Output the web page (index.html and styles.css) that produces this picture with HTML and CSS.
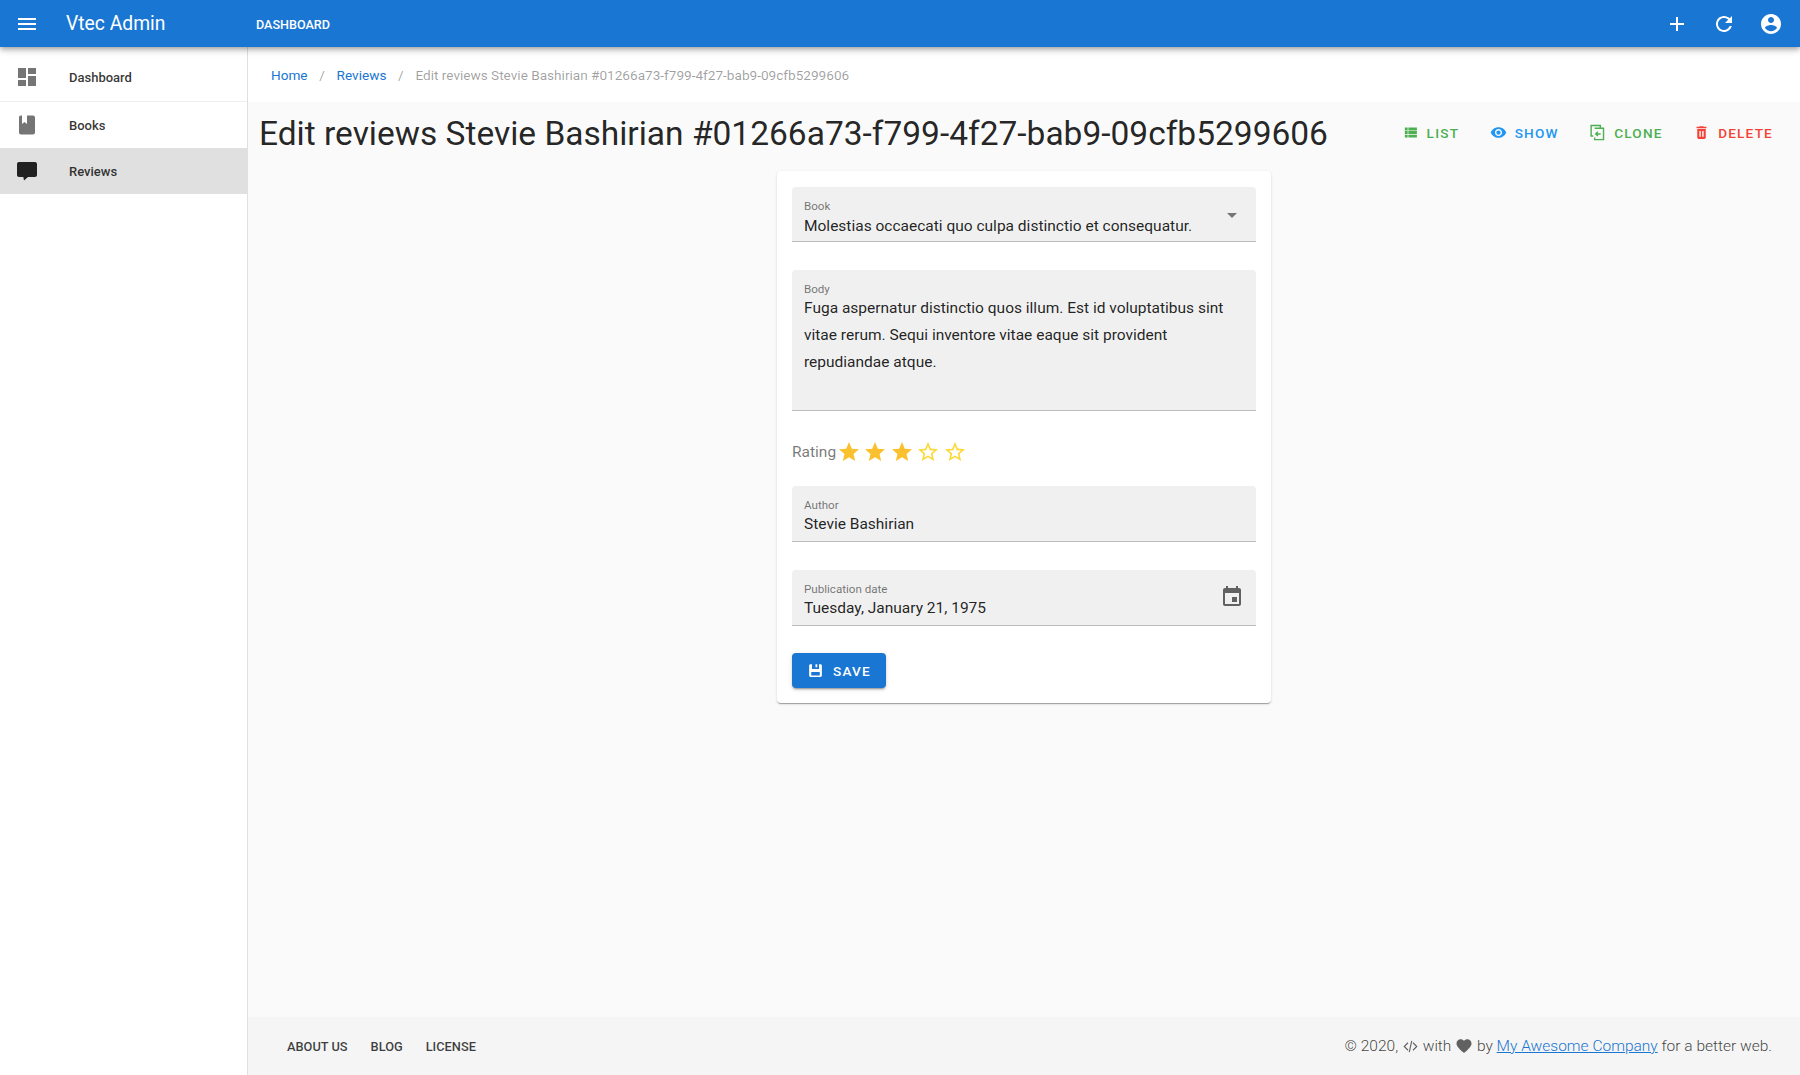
FILE: index.html
```html
<!DOCTYPE html>
<html lang="en">
<head>
    <meta charset="UTF-8">
    <title>Vtec Admin</title>
    <link rel="stylesheet" href="styles.css">
</head>
<body>
    <header class="appbar">
        <svg class="icon menu-icon" viewBox="0 0 24 24"><path d="M3 18h18v-2H3v2zm0-5h18v-2H3v2zm0-7v2h18V6H3z"/></svg>
        <span class="brand">Vtec Admin</span>
        <span class="appbar-link">DASHBOARD</span>
        <div class="appbar-actions">
            <svg class="icon" viewBox="0 0 24 24"><path d="M19 13h-6v6h-2v-6H5v-2h6V5h2v6h6v2z"/></svg>
            <svg class="icon" viewBox="0 0 24 24"><path d="M17.65 6.35C16.2 4.9 14.21 4 12 4c-4.42 0-7.99 3.58-7.99 8s3.57 8 7.99 8c3.73 0 6.84-2.55 7.73-6h-2.08c-.82 2.33-3.04 4-5.65 4-3.31 0-6-2.69-6-6s2.69-6 6-6c1.66 0 3.14.69 4.22 1.78L13 11h7V4l-2.35 2.35z"/></svg>
            <svg class="icon" viewBox="0 0 24 24"><path d="M12 2C6.48 2 2 6.48 2 12s4.48 10 10 10 10-4.48 10-10S17.52 2 12 2zm0 3c1.66 0 3 1.34 3 3s-1.34 3-3 3-3-1.34-3-3 1.34-3 3-3zm0 14.2c-2.5 0-4.71-1.28-6-3.22.03-1.99 4-3.08 6-3.08 1.99 0 5.97 1.09 6 3.08-1.29 1.94-3.5 3.22-6 3.22z"/></svg>
        </div>
    </header>

    <div class="layout">
        <nav class="sidebar">
            <a class="nav-item nav-first">
                <svg class="icon" viewBox="0 0 24 24"><path d="M3 13h8V3H3v10zm0 8h8v-6H3v6zm10 0h8V11h-8v10zm0-18v6h8V3h-8z"/></svg>
                <span>Dashboard</span>
            </a>
            <a class="nav-item">
                <svg class="icon" viewBox="0 0 24 24"><path d="M7 2.5V11l2.5-2 2.5 2V2.500h6c1.100 0 2 .9 2 2v15c0 1.100-.9 2-2 2H6c-1.100 0-2-.9-2-2v-15c0-1.100.9-2 2-2z"/></svg>
                <span>Books</span>
            </a>
            <a class="nav-item nav-active">
                <svg class="icon" viewBox="0 0 24 24"><path d="M4 3h16c1.100 0 2 .9 2 2v11c0 1.100-.9 2-2 2h-7l-4 3.500-.7-3.500H4c-1.100 0-2-.9-2-2V5c0-1.100.9-2 2-2z"/></svg>
                <span>Reviews</span>
            </a>
        </nav>

        <div class="content">
            <div class="breadcrumbs">
                <a>Home</a>
                <span class="crumb-sep">/</span>
                <a>Reviews</a>
                <span class="crumb-sep">/</span>
                <span class="crumb-current">Edit reviews Stevie Bashirian #01266a73-f799-4f27-bab9-09cfb5299606</span>
            </div>

            <main class="page">
                <div class="page-head">
                    <h1>Edit reviews Stevie Bashirian #01266a73-f799-4f27-bab9-09cfb5299606</h1>
                    <div class="page-actions">
                        <a class="action green">
                            <svg class="icon-sm" viewBox="0 0 24 24"><path d="M4 14h4v-4H4v4zm0 5h4v-4H4v4zM4 9h4V5H4v4zm5 5h12v-4H9v4zm0 5h12v-4H9v4zM9 5v4h12V5H9z"/></svg>
                            LIST
                        </a>
                        <a class="action blue">
                            <svg class="icon-sm" viewBox="0 0 24 24"><path d="M12 4.500C7 4.500 2.730 7.610 1 12c1.730 4.390 6 7.500 11 7.500s9.270-3.110 11-7.500c-1.730-4.390-6-7.500-11-7.500zM12 17c-2.760 0-5-2.240-5-5s2.240-5 5-5 5 2.240 5 5-2.240 5-5 5zm0-8c-1.660 0-3 1.340-3 3s1.340 3 3 3 3-1.340 3-3-1.340-3-3-3z"/></svg>
                            SHOW
                        </a>
                        <a class="action green">
                            <svg class="icon-sm icon-line" viewBox="0 0 24 24"><path d="M6 17H3V2h13v3M8 6h12.500v16H8v-3M16.500 14H9.500M12.500 11l-3 3 3 3"/></svg>
                            CLONE
                        </a>
                        <a class="action red">
                            <svg class="icon-sm" viewBox="0 0 24 24"><path fill-rule="evenodd" d="M6 7h12v12c0 1.100-.9 2-2 2H8c-1.100 0-2-.9-2-2V7zm3 3v8h2v-8H9zm4 0v8h2v-8h-2zM15.500 4l-1-1h-5l-1 1H5v2h14V4h-3.500z"/></svg>
                            DELETE
                        </a>
                    </div>
                </div>

                <form class="card">
                    <div class="field field-book">
                        <label>Book</label>
                        <div class="field-value">Molestias occaecati quo culpa distinctio et consequatur.</div>
                        <span class="select-arrow"></span>
                    </div>
                    <div class="field field-body">
                        <label>Body</label>
                        <div class="field-text">Fuga aspernatur distinctio quos illum. Est id voluptatibus sint vitae rerum. Sequi inventore vitae eaque sit provident repudiandae atque.</div>
                    </div>
                    <div class="rating">
                        <span class="rating-label">Rating</span>
                        <svg class="star" viewBox="0 0 24 24"><path d="M12 17.270L18.180 21l-1.640-7.030L22 9.240l-7.190-.61L12 2 9.190 8.630 2 9.240l5.460 4.730L5.820 21z"/></svg>
                        <svg class="star" viewBox="0 0 24 24"><path d="M12 17.270L18.180 21l-1.640-7.030L22 9.240l-7.190-.61L12 2 9.190 8.630 2 9.240l5.460 4.730L5.820 21z"/></svg>
                        <svg class="star" viewBox="0 0 24 24"><path d="M12 17.270L18.180 21l-1.640-7.030L22 9.240l-7.190-.61L12 2 9.190 8.630 2 9.240l5.460 4.730L5.820 21z"/></svg>
                        <svg class="star star-empty" viewBox="0 0 24 24"><path d="M22 9.240l-7.190-.62L12 2 9.190 8.630 2 9.240l5.460 4.730L5.820 21 12 17.270 18.180 21l-1.630-7.030L22 9.240zM12 15.400l-3.760 2.270 1-4.280-3.320-2.880 4.380-.38L12 6.100l1.710 4.040 4.380.38-3.320 2.880 1 4.280L12 15.400z"/></svg>
                        <svg class="star star-empty" viewBox="0 0 24 24"><path d="M22 9.240l-7.190-.62L12 2 9.190 8.630 2 9.240l5.460 4.730L5.820 21 12 17.270 18.180 21l-1.630-7.030L22 9.240zM12 15.400l-3.760 2.270 1-4.280-3.320-2.880 4.380-.38L12 6.100l1.710 4.040 4.380.38-3.320 2.880 1 4.280L12 15.400z"/></svg>
                    </div>
                    <div class="field field-short">
                        <label>Author</label>
                        <div class="field-value">Stevie Bashirian</div>
                    </div>
                    <div class="field field-short field-date">
                        <label>Publication date</label>
                        <div class="field-value">Tuesday, January 21, 1975</div>
                        <svg class="date-icon" viewBox="0 0 24 24"><path d="M17 12h-5v5h5v-5zM16 1v2H8V1H6v2H5c-1.110 0-1.990.9-1.990 2L3 19c0 1.100.89 2 2 2h14c1.100 0 2-.9 2-2V5c0-1.100-.9-2-2-2h-1V1h-2zm3 18H5V8h14v11z"/></svg>
                    </div>
                    <button class="save-btn" type="button">
                        <svg class="icon-sm" viewBox="0 0 24 24"><path fill-rule="evenodd" d="M5 3h14c1.100 0 2 .9 2 2v14c0 1.100-.9 2-2 2H5c-1.100 0-2-.9-2-2V5c0-1.100.9-2 2-2zm2 0v7h10V3h-2.500v4.500H12V3H7zm-1 11v5h12v-5H6z"/></svg>
                        SAVE
                    </button>
                </form>
            </main>

            <footer class="footer">
                <div class="footer-links">
                    <a>ABOUT US</a>
                    <a>BLOG</a>
                    <a>LICENSE</a>
                </div>
                <div class="footer-copy">
                    © 2020,
                    <svg class="footer-icon code" viewBox="0 0 24 24"><path d="M8 6l-6 6 6 6M16 6l6 6-6 6M14 3l-4 18"/></svg>
                    with
                    <svg class="footer-icon heart" viewBox="0 0 24 24"><path d="M12 21.350l-1.450-1.320C5.400 15.360 2 12.280 2 8.500 2 5.420 4.420 3 7.500 3c1.740 0 3.410.81 4.500 2.090C13.090 3.810 14.760 3 16.500 3 19.580 3 22 5.420 22 8.500c0 3.780-3.400 6.860-8.550 11.540L12 21.350z"/></svg>
                    by <a>My Awesome Company</a> for a better web.
                </div>
            </footer>
        </div>
    </div>
</body>
</html>
```

FILE: styles.css
```css
* {
    box-sizing: border-box;
}

html, body {
    height: 100%;
}

body {
    margin: 0;
    display: flex;
    flex-direction: column;
    background-color: #fafafa;
    color: rgba(0, 0, 0, 0.87);
    font-family: Roboto, "Liberation Sans", sans-serif;
    overflow: hidden;
}

.icon {
    width: 24px;
    height: 24px;
    fill: currentColor;
    flex-shrink: 0;
}

.icon-sm {
    width: 17px;
    height: 17px;
    fill: currentColor;
    flex-shrink: 0;
}

.icon-line {
    fill: none;
    stroke: currentColor;
    stroke-width: 2;
}

/* top bar */
.appbar {
    height: 47px;
    display: flex;
    align-items: center;
    padding: 0 15px;
    background-color: #1976d2;
    color: #fff;
    box-shadow: 0 2px 4px -1px rgba(0, 0, 0, 0.2), 0 4px 5px 0 rgba(0, 0, 0, 0.14), 0 1px 10px 0 rgba(0, 0, 0, 0.12);
    position: relative;
    z-index: 2;
    flex-shrink: 0;
}

.brand {
    margin-left: 27px;
    width: 190px;
    font-size: 19.3px;
}

.appbar-link {
    padding-top: 1px;
    font-size: 12.6px;
    font-weight: 500;
}

.appbar-actions {
    margin-left: auto;
    display: flex;
    gap: 23px;
    padding-right: 2px;
}

/* main layout */
.layout {
    flex: 1;
    display: flex;
    min-height: 0;
}

.sidebar {
    width: 248px;
    flex-shrink: 0;
    background-color: #fff;
    border-right: 1px solid #e0e0e0;
}

.nav-item {
    height: 46px;
    display: flex;
    align-items: center;
    padding-left: 15px;
    gap: 30px;
    font-size: 13px;
    font-weight: 500;
    color: rgba(0, 0, 0, 0.8);
}

.nav-item .icon {
    color: #757575;
}

.nav-first {
    height: 55px;
    padding-top: 6px;
    border-bottom: 1px solid #eee;
}

.nav-active {
    background-color: #e0e0e0;
}

.nav-active .icon {
    color: #212121;
}

.content {
    flex: 1;
    min-width: 0;
    display: flex;
    flex-direction: column;
}

.breadcrumbs {
    height: 55px;
    flex-shrink: 0;
    display: flex;
    align-items: center;
    padding-left: 23px;
    background-color: #fff;
    font-size: 13.6px;
}

.breadcrumbs a {
    color: #1976d2;
}

.crumb-sep {
    margin: 0 11.7px;
    color: rgba(0, 0, 0, 0.38);
}

.crumb-current {
    color: rgba(0, 0, 0, 0.38);
}

.page {
    flex: 1;
    padding: 0 12px;
}

.page-head {
    display: flex;
    align-items: center;
    justify-content: space-between;
    height: 69px;
    padding-bottom: 6px;
}

h1 {
    margin: 0 0 0 -1px;
    font-size: 33.5px;
    font-weight: 400;
    line-height: 64px;
    color: rgba(0, 0, 0, 0.87);
}

.page-actions {
    display: flex;
    gap: 30.5px;
    padding-right: 15px;
    padding-bottom: 2px;
}

.action {
    display: flex;
    align-items: center;
    gap: 8px;
    font-size: 13.6px;
    font-weight: 500;
    letter-spacing: 1.2px;
}

.green {
    color: #4caf50;
}

.blue {
    color: #2196f3;
}

.red {
    color: #f44336;
}

/* form card */
.card {
    width: 494px;
    margin: 0 auto;
    padding: 16px 15px 15px;
    background-color: #fff;
    border-radius: 4px;
    box-shadow: 0 2px 1px -1px rgba(0, 0, 0, 0.2), 0 1px 1px 0 rgba(0, 0, 0, 0.14), 0 1px 3px 0 rgba(0, 0, 0, 0.12);
}

.field {
    position: relative;
    height: 55px;
    margin-bottom: 28px;
    padding: 12px 12px 0;
    background-color: #f0f0f0;
    border-radius: 4px 4px 0 0;
    border-bottom: 1px solid #bdbdbd;
}

.field label {
    display: block;
    font-size: 11.6px;
    line-height: 14px;
    color: rgba(0, 0, 0, 0.54);
}

.field-value {
    font-size: 15.5px;
    line-height: 24px;
    margin-top: 1px;
}

.field-short {
    height: 56px;
}

.field-short .field-value {
    margin-top: 0;
}

.field-date {
    margin-bottom: 27px;
}

.field-body {
    height: 141px;
    margin-bottom: 27px;
}

.field-text {
    font-size: 15.5px;
    line-height: 27px;
    margin-top: -1px;
}

.select-arrow {
    position: absolute;
    right: 19px;
    top: 26px;
    border-left: 5px solid transparent;
    border-right: 5px solid transparent;
    border-top: 5px solid #757575;
}

.date-icon {
    position: absolute;
    right: 12px;
    top: 15px;
    width: 24px;
    height: 24px;
    fill: #616161;
}

.rating {
    display: flex;
    align-items: center;
    height: 28px;
    margin-bottom: 20px;
    font-size: 15.5px;
    color: rgba(0, 0, 0, 0.54);
}

.rating-label {
    margin-right: 1px;
}

.star {
    width: 24px;
    height: 24px;
    margin-right: 2.4px;
    fill: #fbc02d;
}

.star-empty {
    fill: #fdd835;
}

.save-btn {
    display: flex;
    align-items: center;
    gap: 9px;
    height: 35px;
    padding: 0 15px;
    border: none;
    border-radius: 4px;
    background-color: #1976d2;
    color: #fff;
    font-family: inherit;
    font-size: 13.6px;
    font-weight: 500;
    letter-spacing: 1.2px;
    box-shadow: 0 3px 1px -2px rgba(0, 0, 0, 0.2), 0 2px 2px 0 rgba(0, 0, 0, 0.14), 0 1px 5px 0 rgba(0, 0, 0, 0.12);
}

/* footer */
.footer {
    height: 58px;
    flex-shrink: 0;
    display: flex;
    align-items: center;
    justify-content: space-between;
    padding: 0 28px 0 39px;
    background-color: #f5f5f5;
}

.footer-links {
    display: flex;
    gap: 23px;
    font-size: 12.8px;
    font-weight: 500;
    color: rgba(0, 0, 0, 0.75);
}

.footer-copy {
    font-size: 15.5px;
    font-weight: 300;
    color: rgba(0, 0, 0, 0.75);
}

.footer-copy a {
    color: #1976d2;
    text-decoration: underline;
}

.footer-icon {
    vertical-align: -3px;
}

.code {
    width: 17px;
    height: 15px;
    fill: none;
    stroke: #616161;
    stroke-width: 1.8;
}

.heart {
    width: 18px;
    height: 18px;
    fill: #616161;
    vertical-align: -4px;
}
```
